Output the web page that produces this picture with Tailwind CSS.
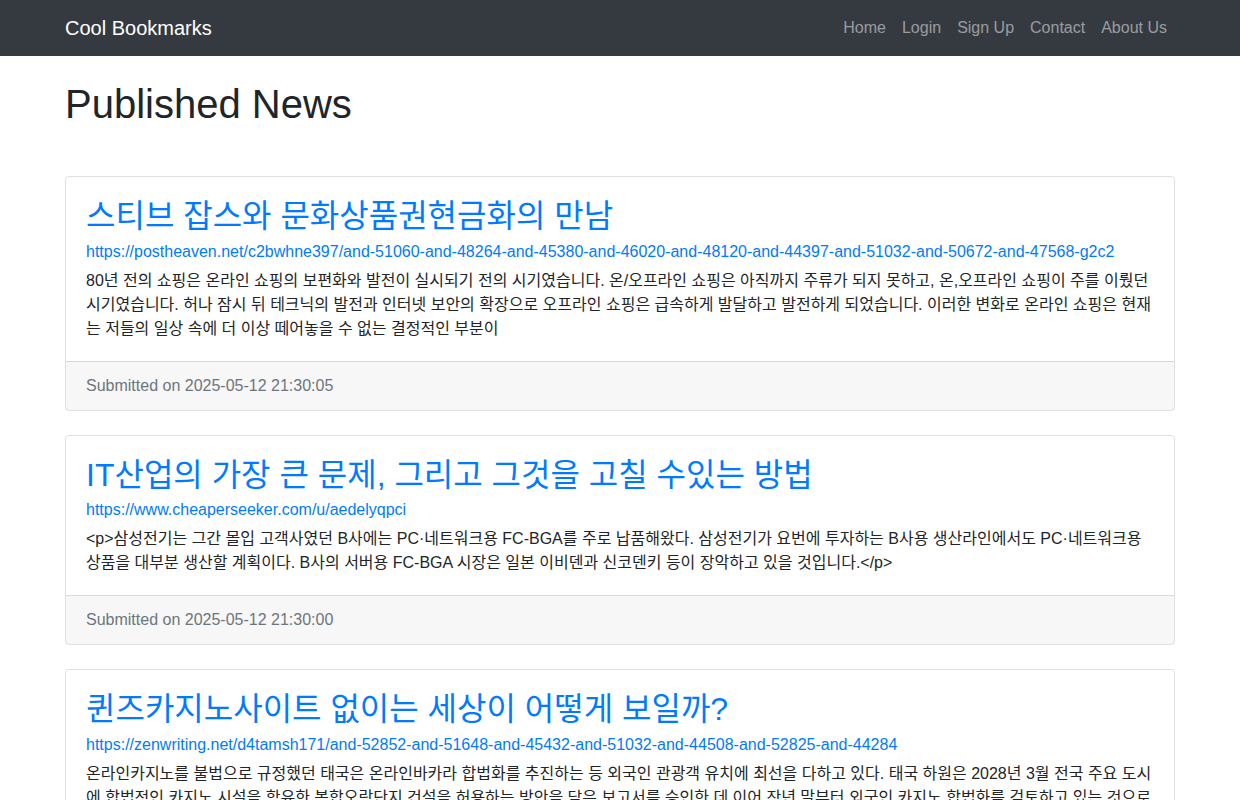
<!doctype html>
<html lang="ko"><head><meta charset="utf-8"><script src="https://cdn.jsdelivr.net/npm/@tailwindcss/browser@4"></script></head>
<body class="bg-white text-[#212529] text-base leading-6 font-['Liberation_Sans','Noto_Sans_CJK_KR',sans-serif] h-[800px] overflow-hidden">
<nav class="h-14 bg-[#343a40] flex justify-center">
<div class="w-[1140px] px-[15px] flex items-center justify-between">
<a class="text-xl leading-[30px] text-white">Cool Bookmarks</a>
<ul class="flex text-white/50"><li class="px-2">Home</li><li class="px-2">Login</li><li class="px-2">Sign Up</li><li class="px-2">Contact</li><li class="px-2">About Us</li></ul>
</div></nav>
<main class="w-[1140px] mx-auto px-[15px]">
<h1 class="text-[40px] leading-[48px] mb-12 mt-6">Published News</h1>
<article class="border border-black/12 rounded mb-6">
<div class="p-5"><h2 class="text-[32px] leading-[38px] text-[#007bff] mb-[4.7px]">스티브 잡스와 문화상품권현금화의 만남</h2>
<a class="block text-[#007bff] mb-[4.85px]">https://postheaven.net/c2bwhne397/and-51060-and-48264-and-45380-and-46020-and-48120-and-44397-and-51032-and-50672-and-47568-g2c2</a>
<p>80년 전의 쇼핑은 온라인 쇼핑의 보편화와 발전이 실시되기 전의 시기였습니다. 온/오프라인 쇼핑은 아직까지 주류가 되지 못하고, 온,오프라인 쇼핑이 주를 이뤘던 시기였습니다. 허나 잠시 뒤 테크닉의 발전과 인터넷 보안의 확장으로 오프라인 쇼핑은 급속하게 발달하고 발전하게 되었습니다. 이러한 변화로 온라인 쇼핑은 현재는 저들의 일상 속에 더 이상 떼어놓을 수 없는 결정적인 부분이</p></div>
<div class="px-5 py-3 bg-black/3 border-t border-black/12 text-[#6c757d]">Submitted on 2025-05-12 21:30:05</div>
</article>
<article class="border border-black/12 rounded mb-6">
<div class="p-5"><h2 class="text-[32px] leading-[38px] text-[#007bff] mb-[4.7px]">IT산업의 가장 큰 문제, 그리고 그것을 고칠 수있는 방법</h2>
<a class="block text-[#007bff] mb-[4.85px]">https://www.cheaperseeker.com/u/aedelyqpci</a>
<p>&lt;p&gt;삼성전기는 그간 몰입 고객사였던 B사에는 PC·네트워크용 FC-BGA를 주로 납품해왔다. 삼성전기가 요번에 투자하는 B사용 생산라인에서도 PC·네트워크용 상품을 대부분 생산할 계획이다. B사의 서버용 FC-BGA 시장은 일본 이비덴과 신코덴키 등이 장악하고 있을 것입니다.&lt;/p&gt;</p></div>
<div class="px-5 py-3 bg-black/3 border-t border-black/12 text-[#6c757d]">Submitted on 2025-05-12 21:30:00</div>
</article>
<article class="border border-black/12 rounded mb-6">
<div class="p-5"><h2 class="text-[32px] leading-[38px] text-[#007bff] mb-[4.7px]">퀸즈카지노사이트 없이는 세상이 어떻게 보일까?</h2>
<a class="block text-[#007bff] mb-[4.85px]">https://zenwriting.net/d4tamsh171/and-52852-and-51648-and-45432-and-51032-and-44508-and-52825-and-44284</a>
<p>온라인카지노를 불법으로 규정했던 태국은 온라인바카라 합법화를 추진하는 등 외국인 관광객 유치에 최선을 다하고 있다. 태국 하원은 2028년 3월 전국 주요 도시에 합법적인 카지노 시설을 함유한 복합오락단지 건설을 허용하는 방안을 담은 보고서를 승인한 데 이어 작년 말부터 외국인 카지노 합법화를 검토하고 있는 것으로</p></div>
</article>
</main>
</body></html>
